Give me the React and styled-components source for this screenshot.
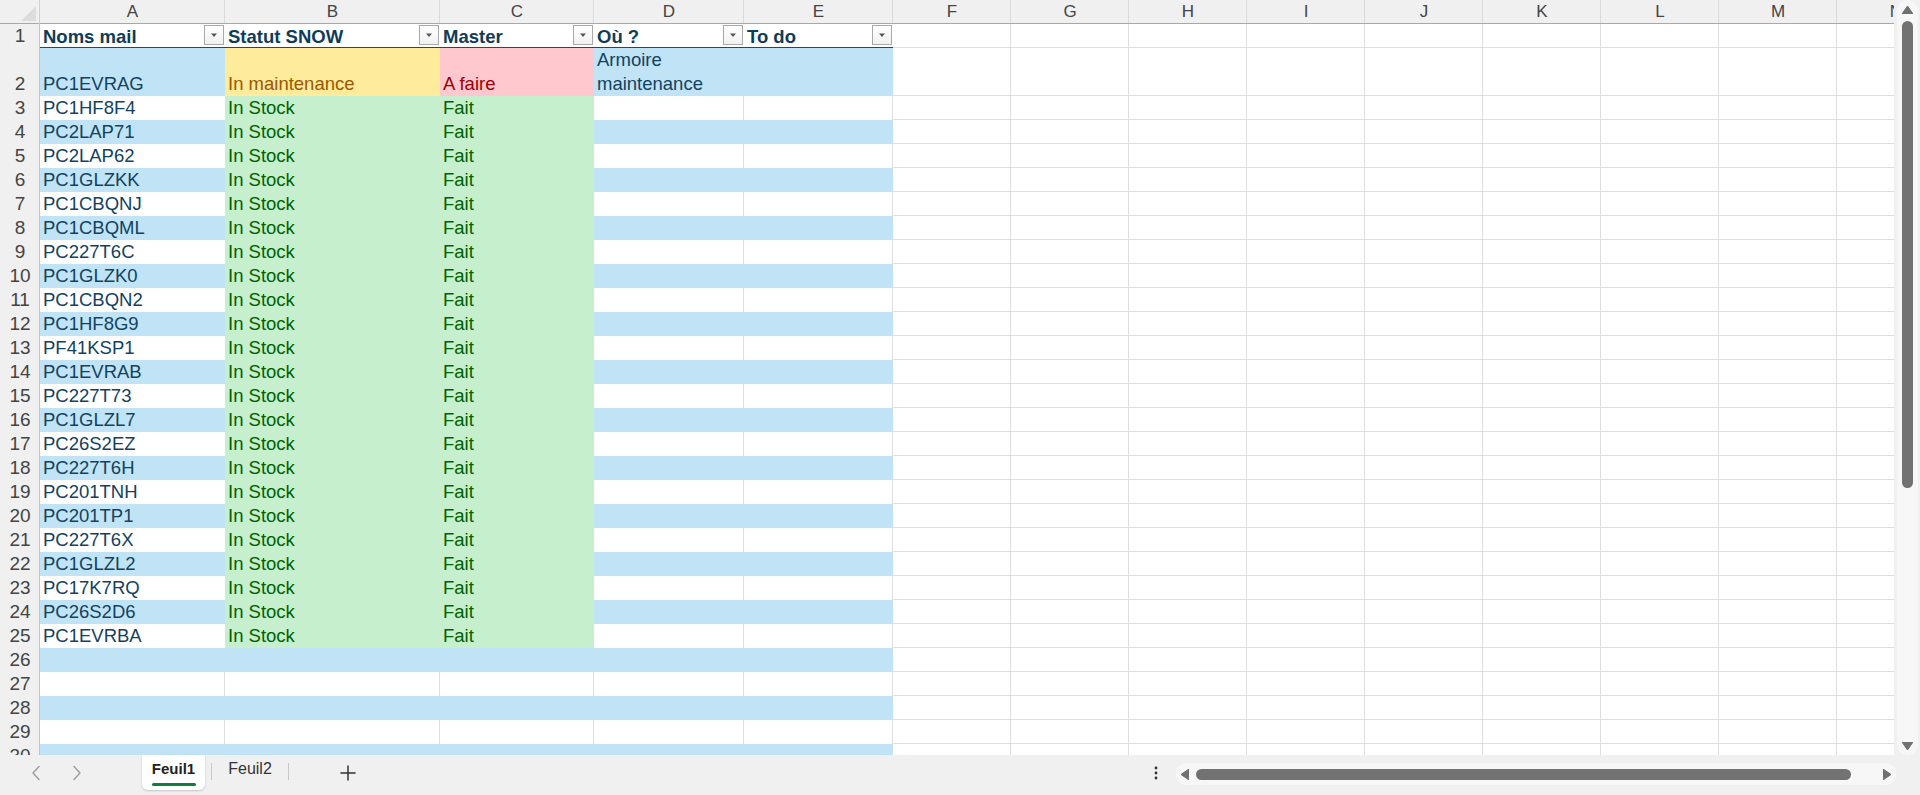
import React from 'react';
import styled, { createGlobalStyle } from 'styled-components';

const GlobalStyle = createGlobalStyle`
  html, body { margin: 0; padding: 0; }
  body { font-family: "Liberation Sans", Arial, sans-serif; background: #ffffff; }
  * { box-sizing: border-box; }
`;

const BLUE = '#c0e4f5';
const GREEN = '#c6efce';
const YELLOW = '#ffeb9c';
const PINK = '#ffc7ce';
const TEXT = '#12425f';
const HEAD = '#0f3c59';
const GRID = '#dedede';

const COLS = [
  { k: 'A', w: 185 }, { k: 'B', w: 215 }, { k: 'C', w: 154 }, { k: 'D', w: 150 }, { k: 'E', w: 149 },
  ...'FGHIJKLMN'.split('').map((k) => ({ k, w: 118 })),
];
const TEMPLATE = `40px ${COLS.map((c) => c.w + 'px').join(' ')}`;

const HEADERS = ['Noms mail', 'Statut SNOW', 'Master', 'Où ?', 'To do'];
const NAMES = [
  'PC1HF8F4', 'PC2LAP71', 'PC2LAP62', 'PC1GLZKK', 'PC1CBQNJ', 'PC1CBQML', 'PC227T6C', 'PC1GLZK0',
  'PC1CBQN2', 'PC1HF8G9', 'PF41KSP1', 'PC1EVRAB', 'PC227T73', 'PC1GLZL7', 'PC26S2EZ', 'PC227T6H',
  'PC201TNH', 'PC201TP1', 'PC227T6X', 'PC1GLZL2', 'PC17K7RQ', 'PC26S2D6', 'PC1EVRBA',
];
const ROW_COUNT = 30;

function cellInfo(r, c) {
  if (c >= 5 || r > ROW_COUNT) return { fill: null };
  if (r === 1) return { fill: '#ffffff', text: HEADERS[c], header: true };
  let fill = r % 2 === 0 ? BLUE : null;
  let text = '';
  let color = TEXT;
  let wrap = false;
  if (r === 2) {
    if (c === 0) text = 'PC1EVRAG';
    if (c === 1) { fill = YELLOW; text = 'In maintenance'; color = '#9c5700'; }
    if (c === 2) { fill = PINK; text = 'A faire'; color = '#9c0006'; }
    if (c === 3) { text = 'Armoire maintenance'; wrap = true; }
  } else if (r <= 25) {
    if (c === 0) text = NAMES[r - 3];
    if (c === 1) { fill = GREEN; text = 'In Stock'; color = '#006100'; }
    if (c === 2) { fill = GREEN; text = 'Fait'; color = '#006100'; }
  }
  return { fill, text, color, wrap };
}

function shadowFor(p) {
  const s = [];
  if (p.$lineR) s.push(`inset -1px 0 0 ${GRID}`);
  if (p.$lineB) s.push(`inset 0 -1px 0 ${GRID}`);
  if (p.$headLine) s.push(`inset 0 -1px 0 #1b4a6a`);
  return s.length ? s.join(', ') : 'none';
}

const Page = styled.div`
  width: 1920px;
  height: 795px;
  display: flex;
  flex-direction: column;
  overflow: hidden;
  background: #f0f0f0;
`;

const Main = styled.div`
  height: 755px;
  display: flex;
  flex-direction: row;
`;

const Sheet = styled.div`
  flex: 1;
  min-width: 0;
  overflow: hidden;
  background: #ffffff;
  display: flex;
  flex-direction: column;
`;

const GridRow = styled.div`
  display: grid;
  grid-template-columns: ${TEMPLATE};
  height: ${(p) => p.$h}px;
  flex: none;
`;

const ColHeadRow = styled(GridRow)`
  background: #f0f0f0;
  box-shadow: inset 0 -1px 0 #a8a8a8;
`;

const Corner = styled.div`
  display: flex;
  justify-content: flex-end;
  align-items: flex-end;
  padding: 0 4px 3px 0;
  box-shadow: inset -1px 0 0 #d0d0d0, inset 0 -1px 0 #a8a8a8;
`;

const ColLetter = styled.div`
  display: flex;
  align-items: center;
  justify-content: center;
  font-size: 17px;
  line-height: 23px;
  height: 23px;
  color: #444444;
  box-shadow: inset -1px 0 0 #dadada;
`;

const RowNum = styled.div`
  display: flex;
  align-items: flex-end;
  justify-content: center;
  background: #f0f0f0;
  font-size: 19px;
  line-height: 24px;
  color: #444444;
  box-shadow: inset -1px 0 0 #c4c4c4;
`;

const Cell = styled.div`
  display: flex;
  align-items: flex-end;
  justify-content: ${(p) => (p.$header ? 'space-between' : 'flex-start')};
  padding: ${(p) => (p.$header ? '0 1px 0 3px' : '0 3px')};
  background: ${(p) => p.$fill || '#ffffff'};
  color: ${(p) => p.$color || TEXT};
  font-size: 18.5px;
  line-height: 24px;
  white-space: ${(p) => (p.$wrap ? 'normal' : 'nowrap')};
  overflow: hidden;
  box-shadow: ${shadowFor};
`;

const HeaderLabel = styled.span`
  font-weight: 700;
  color: ${HEAD};
  line-height: 20px;
  padding-bottom: 1px;
`;

const FilterButton = styled.div`
  align-self: flex-start;
  margin-top: 1px;
  width: 20px;
  height: 20px;
  flex: none;
  border: 1px solid #a9a9a9;
  background: linear-gradient(#ffffff, #f1f1f1);
  display: flex;
  align-items: center;
  justify-content: center;
`;

const VScroll = styled.div`
  width: 26px;
  flex: none;
  background: #f0f0f0;
  padding: 0 2px 0 3px;
`;

const VTrack = styled.div`
  height: 100%;
  border-radius: 11px;
  background: #f7f7f7;
  display: flex;
  flex-direction: column;
  align-items: center;
  padding-top: 6px;
`;

const VThumb = styled.div`
  width: 11px;
  height: 467px;
  margin-top: 7px;
  border-radius: 6px;
  background: #727272;
`;

const Spacer = styled.div`
  flex: 1;
`;

const ArrowBox = styled.div`
  display: flex;
  align-items: center;
  justify-content: center;
  flex: none;
  margin: ${(p) => p.$m || '0'};
`;

const BottomBar = styled.div`
  height: 40px;
  display: flex;
  flex-direction: row;
  align-items: flex-start;
  background: #f0f0f0;
`;

const NavGroup = styled.div`
  width: 142px;
  height: 36px;
  display: flex;
  align-items: center;
  padding-left: 28px;
  gap: 25px;
`;

const NavBtn = styled.div`
  width: 16px;
  display: flex;
  justify-content: center;
`;

const Tab = styled.div`
  height: 35px;
  width: ${(p) => p.$w}px;
  display: flex;
  flex-direction: column;
  align-items: center;
  padding-top: 4px;
  background: ${(p) => (p.$active ? '#ffffff' : 'transparent')};
  border-radius: 0 0 6px 6px;
  box-shadow: ${(p) => (p.$active ? '0 1px 2px rgba(0,0,0,0.18)' : 'none')};
  font-size: ${(p) => (p.$active ? 15 : 16)}px;
  line-height: 20px;
  font-weight: ${(p) => (p.$active ? 700 : 400)};
  color: ${(p) => (p.$active ? '#222222' : '#333333')};
`;

const TabLine = styled.div`
  width: 44px;
  height: 3px;
  margin-top: 4px;
  border-radius: 2px;
  background: #107c41;
`;

const TabSep = styled.div`
  width: 1px;
  height: 17px;
  margin: 8px 0 0 ${(p) => p.$ml || 0}px;
  background: #c8c8c8;
`;

const AddBtn = styled.div`
  width: 40px;
  height: 36px;
  margin-left: 39px;
  display: flex;
  align-items: center;
  justify-content: center;
`;

const MoreBtn = styled.div`
  width: 20px;
  height: 36px;
  display: flex;
  align-items: center;
  justify-content: center;
  margin-right: 10px;
`;

const HTrack = styled.div`
  width: 720px;
  height: 22px;
  margin: 8px 24px 0 0;
  border-radius: 11px;
  background: #f7f7f7;
  display: flex;
  align-items: center;
  padding: 0 5px;
`;

const HThumb = styled.div`
  width: 655px;
  height: 11px;
  margin-left: 7px;
  border-radius: 6px;
  background: #727272;
`;

const Tri = ({ dir, w, h }) => {
  const pts = {
    up: `${w / 2},0 ${w},${h} 0,${h}`,
    down: `0,0 ${w},0 ${w / 2},${h}`,
    left: `${w},0 ${w},${h} 0,${h / 2}`,
    right: `0,0 ${w},${h / 2} 0,${h}`,
  }[dir];
  return (
    <svg width={w} height={h} viewBox={`0 0 ${w} ${h}`}>
      <polygon points={pts} fill="#707070" stroke="#707070" strokeWidth="1" strokeLinejoin="round" />
    </svg>
  );
};

const Chevron = ({ left }) => (
  <svg width="10" height="16" viewBox="0 0 10 16">
    <polyline
      points={left ? '8,1.5 2,8 8,14.5' : '2,1.5 8,8 2,14.5'}
      fill="none"
      stroke="#9d9d9d"
      strokeWidth="1.4"
      strokeLinecap="round"
      strokeLinejoin="round"
    />
  </svg>
);

const CornerTriangle = () => (
  <svg width="15" height="15" viewBox="0 0 15 15">
    <polygon points="15,0 15,15 0,15" fill="#dcdcdc" />
  </svg>
);

const FilterGlyph = () => (
  <svg width="8" height="5" viewBox="0 0 8 5">
    <polygon points="1,0.5 7,0.5 4,4" fill="#555555" />
  </svg>
);

const PlusIcon = () => (
  <svg width="16" height="16" viewBox="0 0 16 16">
    <path d="M8 1v14M1 8h14" stroke="#333333" strokeWidth="1.5" strokeLinecap="round" />
  </svg>
);

const DotsIcon = () => (
  <svg width="4" height="14" viewBox="0 0 4 14">
    <circle cx="2" cy="2" r="1.4" fill="#333333" />
    <circle cx="2" cy="7" r="1.4" fill="#333333" />
    <circle cx="2" cy="12" r="1.4" fill="#333333" />
  </svg>
);

function DataRow({ r }) {
  return (
    <GridRow $h={r === 2 ? 48 : 24}>
      <RowNum>{r}</RowNum>
      {COLS.map((col, c) => {
        const info = cellInfo(r, c);
        const right = cellInfo(r, c + 1);
        const below = cellInfo(r + 1, c);
        const lineR = !info.fill && !right.fill;
        const lineB = !info.fill && !below.fill;
        if (info.header) {
          return (
            <Cell key={col.k} $header $fill={info.fill} $headLine>
              <HeaderLabel>{info.text}</HeaderLabel>
              <FilterButton>
                <FilterGlyph />
              </FilterButton>
            </Cell>
          );
        }
        return (
          <Cell
            key={col.k}
            $fill={info.fill}
            $color={info.color}
            $wrap={info.wrap}
            $lineR={lineR}
            $lineB={lineB}
          >
            {info.text}
          </Cell>
        );
      })}
    </GridRow>
  );
}

export default function App() {
  const rows = Array.from({ length: ROW_COUNT }, (_, i) => i + 1);
  return (
    <>
      <GlobalStyle />
      <Page>
        <Main>
          <Sheet>
            <ColHeadRow $h={24}>
              <Corner>
                <CornerTriangle />
              </Corner>
              {COLS.map((c) => (
                <ColLetter key={c.k}>{c.k}</ColLetter>
              ))}
            </ColHeadRow>
            {rows.map((r) => (
              <DataRow key={r} r={r} />
            ))}
          </Sheet>
          <VScroll>
            <VTrack>
              <ArrowBox>
                <Tri dir="up" w={11} h={8} />
              </ArrowBox>
              <VThumb />
              <Spacer />
              <ArrowBox $m="0 0 5px 0">
                <Tri dir="down" w={11} h={8} />
              </ArrowBox>
            </VTrack>
          </VScroll>
        </Main>
        <BottomBar>
          <NavGroup>
            <NavBtn>
              <Chevron left />
            </NavBtn>
            <NavBtn>
              <Chevron />
            </NavBtn>
          </NavGroup>
          <Tab $active $w={63}>
            Feuil1
            <TabLine />
          </Tab>
          <TabSep $ml={6} />
          <Tab $w={76}>Feuil2</Tab>
          <TabSep />
          <AddBtn>
            <PlusIcon />
          </AddBtn>
          <Spacer />
          <MoreBtn>
            <DotsIcon />
          </MoreBtn>
          <HTrack>
            <ArrowBox>
              <Tri dir="left" w={8} h={11} />
            </ArrowBox>
            <HThumb />
            <Spacer />
            <ArrowBox>
              <Tri dir="right" w={8} h={11} />
            </ArrowBox>
          </HTrack>
        </BottomBar>
      </Page>
    </>
  );
}
